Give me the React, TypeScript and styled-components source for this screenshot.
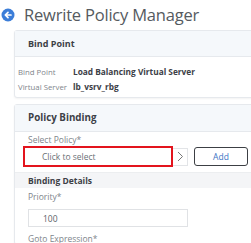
import { ReactElement } from "react";
import styled, { createGlobalStyle } from "styled-components";

const GlobalStyle = createGlobalStyle`
    body {
        margin: 0;
        background: #ffffff;
        font-family: "Open Sans", "Noto Sans", sans-serif;
        overflow: hidden;
    }
`;

export default function App(): ReactElement {
    return (
        <Page>
            <GlobalStyle />
            <TitleRow>
                <BackIcon viewBox="0 0 14 14">
                    <circle cx="7" cy="7" r="6.5" fill="#3b7dd8" />
                    <path d="M10 7H4.6M7 4.3L4.3 7L7 9.7" stroke="#fff" strokeWidth="1.7" fill="none" strokeLinecap="round" strokeLinejoin="round" />
                </BackIcon>
                <Title>Rewrite Policy Manager</Title>
            </TitleRow>

            <Card>
                <CardHeader>Bind Point</CardHeader>
                <InfoBody>
                    <InfoRow>
                        <InfoLabel>Bind Point</InfoLabel>
                        <InfoValue>Load Balancing Virtual Server</InfoValue>
                    </InfoRow>
                    <InfoRow>
                        <InfoLabel>Virtual Server</InfoLabel>
                        <InfoValue>lb_vsrv_rbg</InfoValue>
                    </InfoRow>
                </InfoBody>
            </Card>

            <Card $gap>
                <CardHeader $large>Policy Binding</CardHeader>
                <FormBody>
                    <FieldLabel>Select Policy*</FieldLabel>
                    <SelectRow>
                        <Highlight>
                            <SelectBox>Click to select</SelectBox>
                        </Highlight>
                        <ChevronButton>
                            <svg width="7" height="11" viewBox="0 0 7 11">
                                <path d="M1 1l4.5 4.5L1 10" stroke="#777" strokeWidth="1" fill="none" />
                            </svg>
                        </ChevronButton>
                        <AddButton>Add</AddButton>
                    </SelectRow>
                </FormBody>
                <SubHeader>Binding Details</SubHeader>
                <FormBody $top={3}>
                    <FieldLabel>Priority*</FieldLabel>
                    <TextBox>100</TextBox>
                    <FieldLabel $next>Goto Expression*</FieldLabel>
                </FormBody>
            </Card>
        </Page>
    );
}

const Page = styled.div`
    width: 251px;
    height: 243px;
    overflow: hidden;
`;

const TitleRow = styled.div`
    display: flex;
    align-items: center;
    height: 28px;
    padding-left: 1px;
    gap: 9px;
`;

const BackIcon = styled.svg`
    width: 14px;
    height: 14px;
    flex: none;
    margin-top: 1px;
`;

const Title = styled.h1`
    margin: 0;
    font-size: 16.5px;
    font-weight: 400;
    color: #555a60;
    white-space: nowrap;
    letter-spacing: -0.2px;
`;

const Card = styled.div<{ $gap?: boolean }>`
    margin-left: 14px;
    margin-top: ${({ $gap }) => ($gap ? "6px" : "2px")};
    width: 260px;
    border: 1px solid #e6e9ed;
    border-radius: 3px;
    box-shadow: 0 1px 2px rgba(0, 0, 0, 0.05);
    background: #ffffff;
`;

const CardHeader = styled.div<{ $large?: boolean }>`
    height: ${({ $large }) => ($large ? "27px" : "26px")};
    display: flex;
    align-items: center;
    padding-left: 13px;
    background: #f5f8fb;
    border-bottom: 1px solid #e6e9ed;
    font-size: ${({ $large }) => ($large ? "9.8px" : "9px")};
    font-weight: 700;
    color: #3c4046;
    box-sizing: border-box;
    padding-bottom: 1px;
`;

const InfoBody = styled.div`
    padding: 7px 0 3px 3px;
    display: flex;
    flex-direction: column;
`;

const InfoRow = styled.div`
    display: flex;
    align-items: center;
    height: 15px;
`;

const InfoLabel = styled.span`
    width: 55px;
    flex: none;
    font-size: 7.8px;
    color: #80858b;
`;

const InfoValue = styled.span`
    font-size: 8.3px;
    font-weight: 700;
    color: #3c4046;
`;

const FormBody = styled.div<{ $top?: number }>`
    padding: ${({ $top }) => $top ?? 2}px 0 0 13px;
    display: flex;
    flex-direction: column;
`;

const FieldLabel = styled.div<{ $next?: boolean }>`
    font-size: 8.5px;
    color: #80858b;
    height: 11px;
    line-height: 11px;
    margin-top: ${({ $next }) => ($next ? "6px" : "0")};
`;

const SelectRow = styled.div`
    display: flex;
    align-items: center;
    margin-left: -5px;
    margin-top: 1px;
    margin-bottom: 5px;
`;

const Highlight = styled.div`
    border: 2px solid #e3141d;
    display: flex;
`;

const SelectBox = styled.div`
    width: 129px;
    height: 17px;
    padding-left: 17px;
    display: flex;
    align-items: center;
    font-size: 8.5px;
    color: #6b7076;
    background: #ffffff;
`;

const ChevronButton = styled.div`
    width: 14px;
    height: 16px;
    border: 1px solid #e2e4e7;
    border-left: none;
    display: flex;
    align-items: center;
    justify-content: center;
`;

const AddButton = styled.div`
    margin-left: 6px;
    width: 52px;
    height: 17px;
    border: 1.5px solid #3c3f44;
    border-radius: 3px;
    display: flex;
    align-items: center;
    justify-content: center;
    font-size: 8.5px;
    color: #3a72c4;
`;

const SubHeader = styled.div`
    height: 15px;
    display: flex;
    align-items: center;
    padding-left: 13px;
    background: #f4f5f7;
    border-top: 1px solid #eceef0;
    font-size: 8.5px;
    font-weight: 700;
    color: #3c4046;
`;

const TextBox = styled.div`
    width: 144px;
    height: 16px;
    padding-left: 14px;
    margin-top: 7px;
    border: 1px solid #e0e2e5;
    display: flex;
    align-items: center;
    font-size: 8.5px;
    color: #5d6268;
`;
